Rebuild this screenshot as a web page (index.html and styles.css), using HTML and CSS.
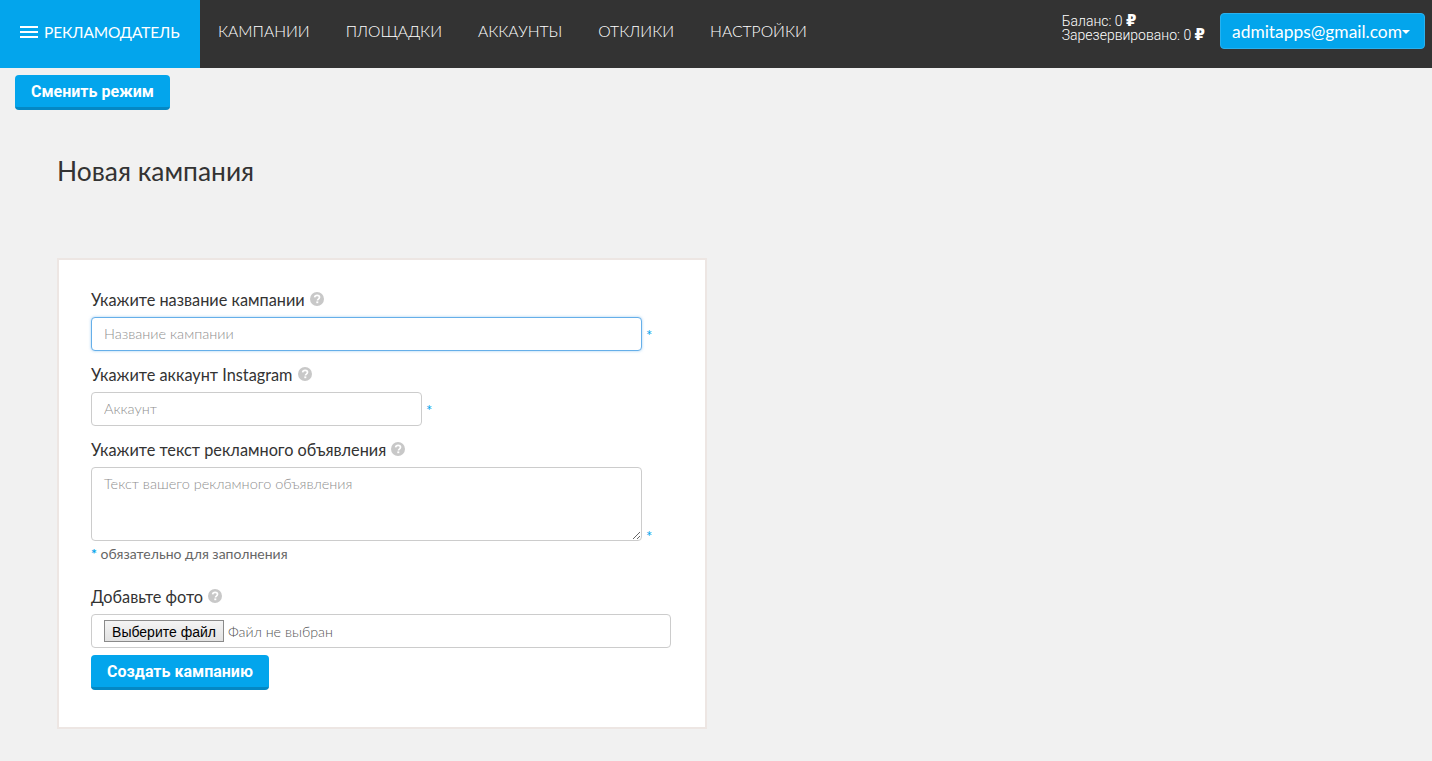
FILE: index.html
```html
<!DOCTYPE html>
<html lang="ru">
<head>
<meta charset="utf-8">
<title>Новая кампания</title>
<link rel="stylesheet" href="styles.css">
</head>
<body>
<header class="topbar">
  <a class="brand">
    <svg class="burger" width="18" height="12" viewBox="0 0 18 12"><path d="M0 1h18M0 6h18M0 11h18" stroke="#fff" stroke-width="2"/></svg>
    <span>РЕКЛАМОДАТЕЛЬ</span>
  </a>
  <nav class="nav">
    <a>КАМПАНИИ</a><a>ПЛОЩАДКИ</a><a>АККАУНТЫ</a><a>ОТКЛИКИ</a><a>НАСТРОЙКИ</a>
  </nav>
  <div class="balance">
    <div>Баланс: 0 <b class="rub">₽</b></div>
    <div>Зарезервировано: 0 <b class="rub">₽</b></div>
  </div>
  <button class="account">admitapps@gmail.com<i class="caret"></i></button>
</header>
<main class="page">
  <button class="btn btn-switch">Сменить режим</button>
  <h1 class="title">Новая кампания</h1>
  <form class="card">
    <div class="group">
      <label class="label">Укажите название кампании
        <svg class="help" viewBox="0 0 14 14"><circle cx="7" cy="7" r="7" fill="#c8c8c8"/><path d="M4.6 5.3C4.8 4 5.8 3.3 7.1 3.3c1.4 0 2.4.8 2.4 2 0 1.9-2 1.700-2 3.100" fill="none" stroke="#fff" stroke-width="1.700"/><rect x="6.300" y="9.400" width="2" height="1.800" fill="#fff"/></svg>
      </label>
      <div class="row"><input class="field field-wide is-focus" placeholder="Название кампании"><span class="req">*</span></div>
    </div>
    <div class="group">
      <label class="label">Укажите аккаунт Instagram
        <svg class="help" viewBox="0 0 14 14"><circle cx="7" cy="7" r="7" fill="#c8c8c8"/><path d="M4.6 5.3C4.8 4 5.8 3.3 7.1 3.3c1.4 0 2.4.8 2.4 2 0 1.9-2 1.700-2 3.100" fill="none" stroke="#fff" stroke-width="1.700"/><rect x="6.300" y="9.400" width="2" height="1.800" fill="#fff"/></svg>
      </label>
      <div class="row"><input class="field field-narrow" placeholder="Аккаунт"><span class="req">*</span></div>
    </div>
    <div class="group">
      <label class="label">Укажите текст рекламного объявления
        <svg class="help" viewBox="0 0 14 14"><circle cx="7" cy="7" r="7" fill="#c8c8c8"/><path d="M4.6 5.3C4.8 4 5.8 3.3 7.1 3.3c1.4 0 2.4.8 2.4 2 0 1.9-2 1.700-2 3.100" fill="none" stroke="#fff" stroke-width="1.700"/><rect x="6.300" y="9.400" width="2" height="1.800" fill="#fff"/></svg>
      </label>
      <div class="row row-end"><textarea class="field field-wide area" placeholder="Текст вашего рекламного объявления"></textarea><span class="req">*</span></div>
    </div>
    <p class="note"><span class="note-star">*</span> обязательно для заполнения</p>
    <div class="group group-photo">
      <label class="label">Добавьте фото
        <svg class="help" viewBox="0 0 14 14"><circle cx="7" cy="7" r="7" fill="#c8c8c8"/><path d="M4.6 5.3C4.8 4 5.8 3.3 7.1 3.3c1.4 0 2.4.8 2.4 2 0 1.9-2 1.700-2 3.100" fill="none" stroke="#fff" stroke-width="1.700"/><rect x="6.300" y="9.400" width="2" height="1.800" fill="#fff"/></svg>
      </label>
      <div class="file"><button type="button" class="file-btn">Выберите файл</button><span class="file-name">Файл не выбран</span></div>
    </div>
    <button type="button" class="btn btn-create">Создать кампанию</button>
  </form>
</main>
</body>
</html>
```
FILE: styles.css
```css
* { box-sizing: border-box; }
html, body { margin: 0; height: 100%; }
body { background: #f1f1f1; font-family: Lato, "Open Sans", sans-serif; color: #333; overflow: hidden; }
.topbar { display: flex; align-items: center; height: 68px; background: #333; color: #fff; padding-right: 7px; }
.brand { display: flex; align-items: center; gap: 6px; width: 200px; height: 100%; padding: 0 0 4px 20px; background: #03a5ec; font-size: 15.5px; font-weight: 400; letter-spacing: -0.13px; }
.nav { display: flex; gap: 36px; margin-left: 18px; padding-bottom: 7px; font-size: 15.7px; font-weight: 300; }
.balance { margin-left: auto; margin-right: 15px; margin-top: -13px; font: 300 14px/14px Roboto, sans-serif; }
.rub { font-family: "DejaVu Sans", sans-serif; font-weight: 700; font-size: 15px; line-height: 0; }
.account { display: flex; align-items: center; height: 36px; width: 205px; margin-top: -6px; padding: 0 0 0 11px; background: #03a5ec; color: #fff; border: 1px solid #29b1ee; border-radius: 4px; font: 400 17.4px Lato, sans-serif; white-space: nowrap; }
.caret { width: 0; height: 0; margin-top: 2px; border-left: 4px solid transparent; border-right: 4px solid transparent; border-top: 4px solid #fff; }
.page { padding: 7px 15px 0; }
.btn { display: block; height: 35px; background: #03a5ec; color: #fff; border: 0; border-bottom: 3px solid #0488c4; border-radius: 4px; font: 700 16px Roboto, sans-serif; padding: 0; white-space: nowrap; }
.btn-switch { width: 155px; }
.title { margin: 44px 0 0 42px; font-size: 26.4px; line-height: 34px; font-weight: 400; color: #333; }
.card { width: 650px; height: 471px; margin: 70px 0 0 42px; padding: 30px 32px; background: #fff; border: 2px solid #ede6e3; }
.group { margin-bottom: 14px; }
.label { display: flex; align-items: center; gap: 5px; height: 20px; margin-bottom: 7px; padding-bottom: 2px; font-size: 16.3px; color: #333; }
.help { width: 14px; height: 14px; }
.row { display: flex; align-items: center; gap: 4px; }
.row-end { align-items: flex-end; }
.req { padding-top: 2px; color: #03a5ec; font-size: 15px; line-height: 14px; }
.row-end .req { margin-bottom: -2px; }
.field { display: block; height: 34px; padding: 0 12px 2px; background: #fff; border: 1px solid #ccc; border-radius: 4px; font: 300 14.5px Lato, sans-serif; color: #333; outline: 0; }
.field::placeholder { color: #8f8f8f; opacity: 1; }
.field-wide { width: 551px; }
.field-narrow { width: 331px; }
.is-focus { border-color: #66afe9; box-shadow: 0 0 3px rgba(102, 175, 233, .6); }
.area { height: 74px; padding-top: 7px; resize: both; }
.note { margin: -11px 0 0; height: 20px; font: 14px/20px Lato, sans-serif; color: #666; }
.note-star { color: #03a5ec; font-weight: 700; }
.group-photo { margin: 23px 0 7px; }
.file { display: flex; align-items: center; gap: 4px; width: 580px; height: 34px; padding-left: 12px; border: 1px solid #ccc; border-radius: 4px; }
.file-btn { width: 120px; height: 22px; padding: 1px 0 0; background: linear-gradient(#f4f4f4, #e2e2e2); border: 1px solid #8a8a8a; border-radius: 0; font: 14px "Liberation Sans", Arial, sans-serif; color: #000; }
.file-name { font: 300 14.3px Lato, sans-serif; color: #555; }
.btn-create { width: 178px; }
```
